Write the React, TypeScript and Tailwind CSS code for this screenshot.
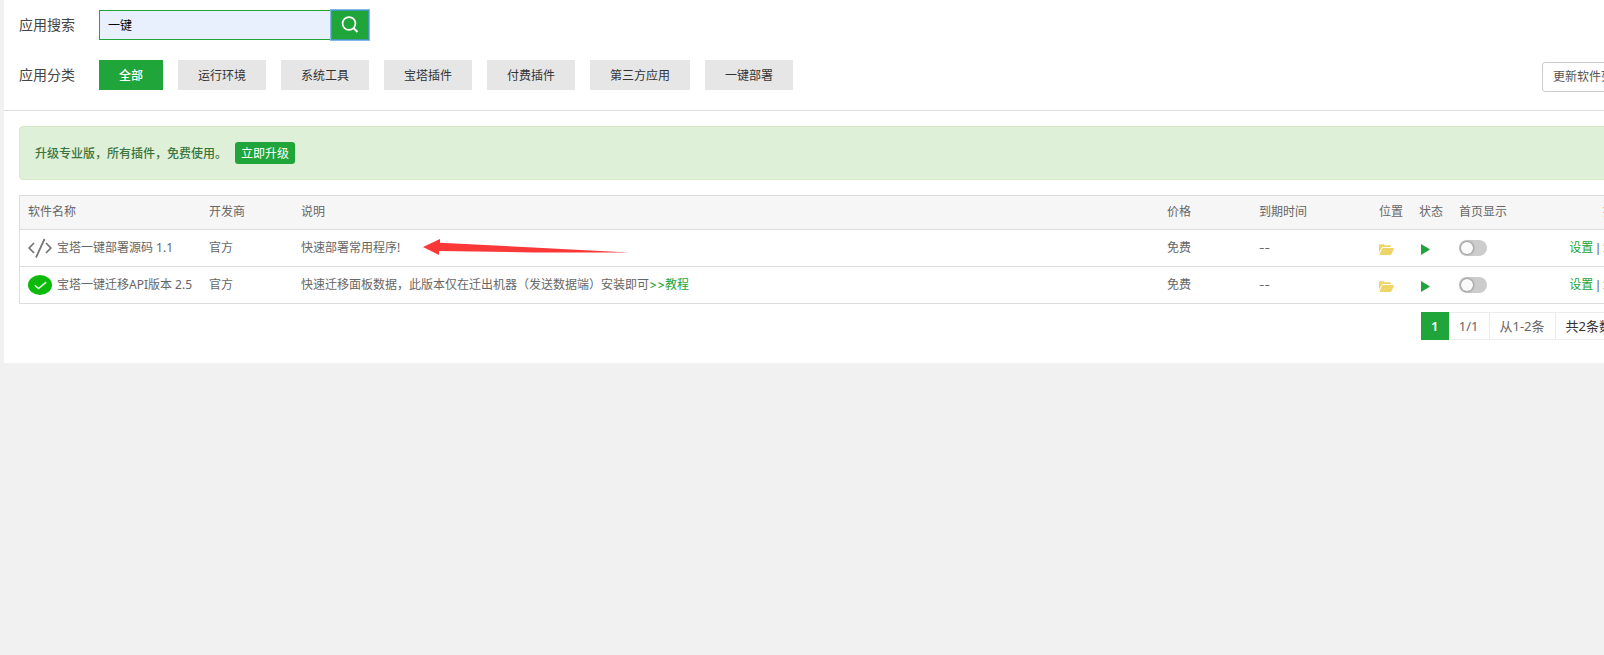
import { clsx } from "clsx";
import { useState } from "react";

const categories = [
  "全部",
  "运行环境",
  "系统工具",
  "宝塔插件",
  "付费插件",
  "第三方应用",
  "一键部署",
];

type Plugin = {
  name: string;
  icon: React.ReactNode;
  vendor: string;
  description: string;
  tutorial?: boolean;
  pointed?: boolean;
};

const plugins: Plugin[] = [
  {
    name: "宝塔一键部署源码 1.1",
    icon: <CodeIcon />,
    vendor: "官方",
    description: "快速部署常用程序!",
    pointed: true,
  },
  {
    name: "宝塔一键迁移API版本 2.5",
    icon: <CheckIcon />,
    vendor: "官方",
    description:
      "快速迁移面板数据，此版本仅在迁出机器（发送数据端）安装即可",
    tutorial: true,
  },
];

export default function App() {
  return (
    <div
      lang="zh-CN"
      className="min-h-screen overflow-hidden bg-[#f1f1f1] pl-1 font-['Noto_Sans','Noto_Sans_CJK_SC',sans-serif] text-xs text-[#666]"
    >
      {/* the panel is wider than the window and runs off its right edge */}
      <main className="-mr-[47px] bg-white pb-[23px]">
        <Filters />
        <div className="px-[15px] pt-[15px]">
          <UpgradeNotice />
          <PluginTable />
          <Pagination />
        </div>
      </main>
    </div>
  );
}

function Filters() {
  const [active, setActive] = useState(categories[0]);

  return (
    <div className="border-b border-[#ddd] px-[15px] pt-[10px] pb-5">
      <form
        className="flex items-center"
        onSubmit={(event) => event.preventDefault()}
      >
        <label htmlFor="search" className="w-20 text-sm text-[#444]">
          应用搜索
        </label>
        <input
          id="search"
          type="text"
          defaultValue="一键"
          className="h-[30px] w-[232px] border border-[#20a53a] bg-[#e8f0fe] px-2 text-black outline-none"
        />
        <button
          aria-label="搜索"
          className="grid h-[30px] w-[38px] place-items-center border border-[#3f9bb0] bg-[#20a53a] text-white ring-1 ring-[#7fb8e8]"
        >
          <svg
            width="18"
            height="18"
            viewBox="0 0 18 18"
            fill="none"
            stroke="currentColor"
            strokeWidth="1.7"
          >
            <circle cx="8" cy="7.5" r="6.4" />
            <path d="M12.500 12l4 4" strokeWidth="2" />
          </svg>
        </button>
      </form>

      <div className="mt-5 flex items-center">
        <span className="w-20 text-sm text-[#444]">应用分类</span>
        <div className="flex gap-[15px]">
          {categories.map((category) => (
            <button
              key={category}
              type="button"
              onClick={() => setActive(category)}
              className={clsx(
                "h-[30px] px-5 pt-[2px]",
                category === active
                  ? "bg-[#20a53a] font-medium text-white"
                  : "bg-[#e6e6e6] text-[#333]"
              )}
            >
              {category}
            </button>
          ))}
        </div>
        <button
          type="button"
          className="mt-[2px] -mb-[2px] ml-auto h-[30px] rounded-[3px] border border-[#ccc] bg-white px-[10px] text-[#555]"
        >
          更新软件列表
        </button>
      </div>
    </div>
  );
}

function UpgradeNotice() {
  return (
    <div className="flex h-[54px] items-center gap-2 rounded border border-[#d6e9c6] bg-[#dff0d8] px-[15px] font-medium text-[#3c763d]">
      <span className="pt-[2px]">升级专业版，所有插件，免费使用。</span>
      <button
        type="button"
        className="h-[22px] rounded-[3px] bg-[#20a53a] px-[6px] pt-[2px] font-normal text-white"
      >
        立即升级
      </button>
    </div>
  );
}

function PluginTable() {
  return (
    <div className="mt-[15px] border border-[#ddd] border-b-0">
      <table className="w-full table-fixed text-left [&_td]:px-2 [&_th]:px-2 [&_th]:font-normal">
        <thead className="bg-[#f6f6f6]">
          <tr className="h-[33px] border-b border-[#ddd]">
            <th className="w-[181px]">软件名称</th>
            <th className="w-[92px]">开发商</th>
            <th>说明</th>
            <th className="w-[92px]">价格</th>
            <th className="w-[120px]">到期时间</th>
            <th className="w-10">位置</th>
            <th className="w-10">状态</th>
            <th className="w-[75px]">首页显示</th>
            <th className="w-[109px] text-right">操作</th>
          </tr>
        </thead>
        <tbody>
          {plugins.map((plugin) => (
            <PluginRow key={plugin.name} plugin={plugin} />
          ))}
        </tbody>
      </table>
    </div>
  );
}

function PluginRow({ plugin }: { plugin: Plugin }) {
  return (
    <tr className="h-[37px] border-b border-[#ddd]">
      <td>
        <span className="flex items-center gap-[5px] whitespace-nowrap">
          {plugin.icon}
          {plugin.name}
        </span>
      </td>
      <td>{plugin.vendor}</td>
      <td>
        <span className="relative">
          {plugin.description}
          {plugin.tutorial && (
            <a
              href="#tutorial"
              className="font-['Inter','Noto_Sans_CJK_SC',sans-serif] text-[#20a53a]"
            >
              &gt;&gt;教程
            </a>
          )}
          {plugin.pointed && <Arrow />}
        </span>
      </td>
      <td>免费</td>
      <td className="font-['Inter',sans-serif]">--</td>
      <td>
        <button type="button" aria-label="打开目录" className="block pt-1">
          <FolderIcon />
        </button>
      </td>
      <td>
        <button type="button" aria-label="停止" className="block pt-1 pl-[2px]">
          <svg width="9" height="11" viewBox="0 0 9 11" fill="#20a53a">
            <path d="M0 0l9 5.5L0 11z" />
          </svg>
        </button>
      </td>
      <td>
        <input
          type="checkbox"
          aria-label="首页显示"
          className="block h-4 w-7 appearance-none rounded-full bg-[#ccc] p-[2px] before:block before:size-3 before:rounded-full before:bg-[#fafafa] before:shadow-[0_0_2px_1px_#999] checked:bg-[#20a53a] checked:before:ml-3"
        />
      </td>
      <td className="text-right font-['Liberation_Sans','Noto_Sans_CJK_SC',sans-serif] whitespace-nowrap">
        <a href="#settings" className="text-[#20a53a]">
          设置
        </a>{" "}
        |{" "}
        <a href="#uninstall" className="text-[#20a53a]">
          卸载
        </a>
      </td>
    </tr>
  );
}

function Pagination() {
  return (
    <nav className="mt-2 flex justify-end text-[13px] leading-[26px]">
      <div className="flex border border-[#ececec]">
        <span className="-my-px -ml-px w-7 bg-[#20a53a] text-center leading-7 font-semibold text-white">
          1
        </span>
        <span className="border-r border-[#ececec] px-[10px]">1/1</span>
        <span className="border-r border-[#ececec] px-[10px]">从1-2条</span>
        <span className="px-[10px] text-[#333]">共2条数据</span>
      </div>
    </nav>
  );
}

function Arrow() {
  return (
    <svg
      className="absolute top-0 left-[122px]"
      width="206"
      height="16"
      viewBox="0 0 206 16"
      fill="#fb3838"
    >
      <path d="M0 8L17 0v3.8L110 8.4 206 13.6 110 13.4 16 12v4z" />
    </svg>
  );
}

function CodeIcon() {
  return (
    <svg
      width="24"
      height="20"
      viewBox="0 0 24 20"
      fill="none"
      stroke="#777"
      strokeWidth="1.8"
    >
      <path d="M6 5L1.2 10 6 15M18 5l4.8 5L18 15M16.5 1L8 19.5" />
    </svg>
  );
}

function CheckIcon() {
  return (
    <svg width="24" height="20" viewBox="0 0 24 20" fill="none">
      <ellipse cx="12" cy="10" rx="12" ry="10" fill="#0cba0c" />
      <path d="M6.8 10.2l3.7 3.3 7.7-6.3" stroke="#e6ffe6" strokeWidth="1.5" />
    </svg>
  );
}

function FolderIcon() {
  return (
    <svg width="15" height="11" viewBox="0 0 15 11" fill="#efd468">
      <path d="M0 8.6V1.2Q0 .3 1 .3h3.6q.8 0 1 .9h5.2q1 0 1 1v.7H4.2q-1 0-1.4.8z" />
      <path d="M4.4 4h10.1q.7 0 .4.7l-2.4 5.5q-.3.8-1.2.8H.9q-.7 0-.4-.7l2.6-5.5Q3.500 4 4.400 4z" />
    </svg>
  );
}
